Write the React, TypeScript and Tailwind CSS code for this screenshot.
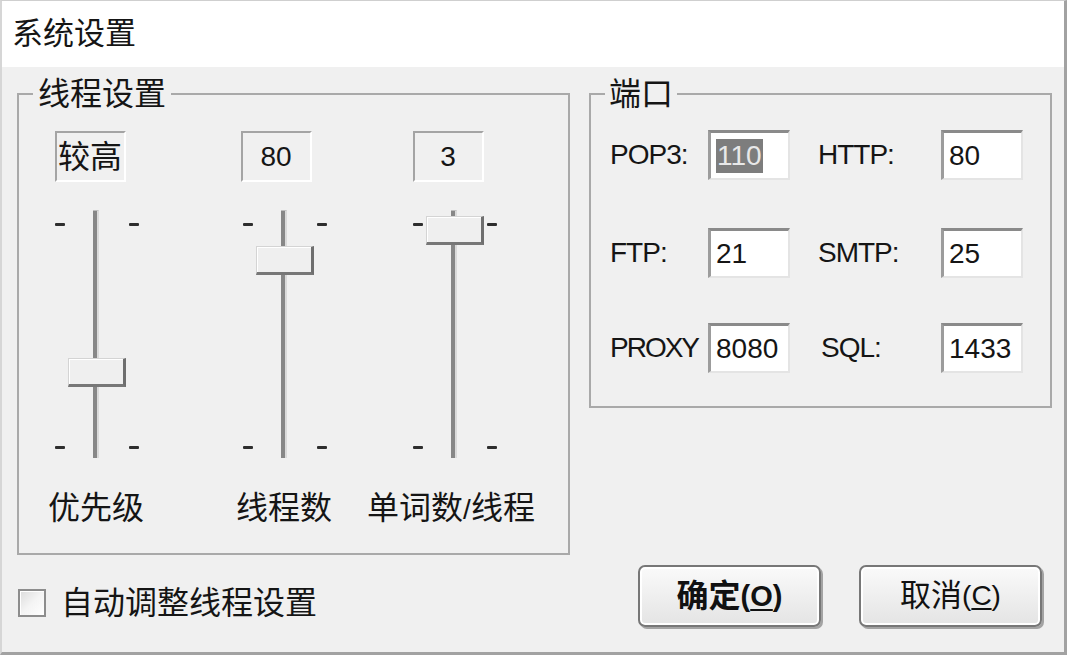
import React from "react";

const FONT = "font-['Liberation_Sans','Noto_Sans_CJK_SC',sans-serif]";

function Slider({ thumbTop }: { thumbTop: number }) {
  return (
    <div className="relative w-[90px] h-[256px] shrink-0">
      <div className="absolute left-[4px] top-[17px] w-[10px] h-[3px] rounded-[1px] bg-[#2e2e2e]" />
      <div className="absolute left-[78px] top-[17px] w-[10px] h-[3px] rounded-[1px] bg-[#2e2e2e]" />
      <div className="absolute left-[4px] top-[240px] w-[10px] h-[3px] rounded-[1px] bg-[#2e2e2e]" />
      <div className="absolute left-[78px] top-[240px] w-[10px] h-[3px] rounded-[1px] bg-[#2e2e2e]" />
      <div className="absolute left-[42px] top-[4px] w-[6px] h-[248px] bg-[#878787] border-r-2 border-r-[#dadada] border-t border-t-[#bdbdbd]" />
      <div
        className="absolute left-[17px] w-[58px] h-[29px] bg-[#efefef] border-t border-l border-t-[#d4d4d4] border-l-[#d4d4d4] border-r-[3px] border-b-[3px] border-r-[#6e6e6e] border-b-[#777777] shadow-[inset_1px_1px_0_#ffffff]"
        style={{ top: thumbTop }}
      />
    </div>
  );
}

function StaticBox({ children, className }: { children: React.ReactNode; className: string }) {
  return (
    <div
      className={`w-[71px] h-[51px] border-2 border-t-[#a4a4a4] border-l-[#a4a4a4] border-b-[#ffffff] border-r-[#ffffff] flex items-center justify-center ${className}`}
    >
      {children}
    </div>
  );
}

function Edit({ value, selected }: { value: string; selected?: boolean }) {
  return (
    <div className="w-[82px] h-[50px] shrink-0 bg-white border-t-[3px] border-l-[3px] border-b-2 border-r-2 border-t-[#8a8a8a] border-l-[#9c9c9c] border-b-[#e4e4e4] border-r-[#e4e4e4] flex items-center pl-[5px] text-[28px] leading-none">
      {selected ? (
        <span className="bg-[#7d7d7d] text-[#e8e8e8] leading-[34px] px-[1px]">{value}</span>
      ) : (
        <span>{value}</span>
      )}
    </div>
  );
}

function PortRow({
  l1,
  v1,
  l2,
  v2,
  sel,
  className,
  l1cls,
  l2pad,
}: {
  l1: string;
  v1: string;
  l2: string;
  v2: string;
  sel?: boolean;
  className: string;
  l1cls?: string;
  l2pad?: string;
}) {
  return (
    <div className={`flex items-center pl-[19px] ${className}`}>
      <div className={`w-[98px] text-[28px] leading-none ${l1cls ?? "tracking-[-1px]"}`}>{l1}</div>
      <Edit value={v1} selected={sel} />
      <div className={`ml-[28px] w-[123px] text-[28px] tracking-[-1px] leading-none ${l2pad ?? ""}`}>{l2}</div>
      <Edit value={v2} />
    </div>
  );
}

export default function App() {
  return (
    <div className={`w-[1070px] h-[657px] bg-white text-[#151515] ${FONT}`}>
      <div className="w-[1067px] h-[655px] flex flex-col border-l-2 border-t border-r-[3px] border-b-[3px] border-l-[#d6d6d6] border-t-[#cfcfcf] border-r-[#a2a2a2] border-b-[#a2a2a2]">
        {/* title */}
        <div className="h-[66px] shrink-0 bg-white flex items-center pl-[10px] text-[31px] leading-[32px]">
          系统设置
        </div>

        {/* body */}
        <div className="flex-1 bg-[#f0f0f0] flex flex-col pt-[11px]">
          <div className="flex items-start">
            {/* thread settings */}
            <fieldset className="ml-[15px] w-[553px] border-2 border-[#a9a9a9]">
              <legend className="ml-[14px] px-[5px] text-[32px] leading-[32px]">线程设置</legend>
              <div className="flex items-start pt-[21px] pb-[27px]">
                {/* col 1 */}
                <div className="ml-[32px] w-[90px] flex flex-col items-center">
                  <StaticBox className="mr-[12px] text-[32px] leading-[32px]">较高</StaticBox>
                  <div className="mt-[24px]">
                    <Slider thumbTop={152} />
                  </div>
                  <div className="mt-[30px] text-[32px] leading-[32px] whitespace-nowrap">优先级</div>
                </div>
                {/* col 2 */}
                <div className="ml-[98px] w-[90px] flex flex-col items-center">
                  <StaticBox className="mr-[16px] text-[28px] leading-none">80</StaticBox>
                  <div className="mt-[24px]">
                    <Slider thumbTop={40} />
                  </div>
                  <div className="mt-[30px] text-[32px] leading-[32px] whitespace-nowrap">线程数</div>
                </div>
                {/* col 3 */}
                <div className="ml-[80px] w-[90px] flex flex-col items-center">
                  <StaticBox className="mr-[12px] text-[28px] leading-none">3</StaticBox>
                  <div className="mt-[24px]">
                    <Slider thumbTop={10} />
                  </div>
                  <div className="mt-[30px] mr-[6px] text-[32px] leading-[32px] whitespace-nowrap">
                    单词数<span className="text-[28px]">/</span>线程
                  </div>
                </div>
              </div>
            </fieldset>

            {/* ports */}
            <fieldset className="ml-[19px] w-[463px] border-2 border-[#a9a9a9]">
              <legend className="ml-[14px] px-[4px] text-[32px] leading-[32px]">端口</legend>
              <div className="flex flex-col pt-[20px] pb-[33px]">
                <PortRow l1="POP3:" v1="110" sel l2="HTTP:" v2="80" className="" />
                <PortRow l1="FTP:" v1="21" l2="SMTP:" v2="25" className="mt-[48px]" />
                <PortRow
                  l1="PROXY"
                  v1="8080"
                  l2="SQL:"
                  v2="1433"
                  className="mt-[45px]"
                  l1cls="tracking-[-2px]"
                  l2pad="pl-[3px]"
                />
              </div>
            </fieldset>
          </div>

          {/* bottom row */}
          <div className="flex items-start justify-between">
            <div className="mt-[32px] ml-[16px] flex items-center">
              <div className="w-[28px] h-[28px] border-2 border-[#8d8d8d] bg-linear-to-br from-[#dcdcdc] via-[#f4f4f4] to-white shadow-[inset_1px_1px_0_#ffffff]" />
              <span className="ml-[15px] text-[32px] leading-[32px]">自动调整线程设置</span>
            </div>
            <div className="mt-[10px] mr-[22px] flex gap-[38px]">
              <button className="w-[183px] h-[62px] rounded-[7px] border-2 border-[#777777] bg-linear-to-b from-[#fafafa] to-[#e4e4e4] shadow-[inset_0_0_0_2px_#ffffff,2px_2px_0_#a3a3a3] flex items-center justify-center font-bold text-[#111]">
                <span className="text-[32px] leading-[32px]">确定</span>
                <span className="text-[29px] leading-[32px]">
                  (<span className="underline underline-offset-[3px]">O</span>)
                </span>
              </button>
              <button className="w-[183px] h-[62px] rounded-[7px] border-2 border-[#777777] bg-linear-to-b from-[#fafafa] to-[#e4e4e4] shadow-[inset_0_0_0_2px_#ffffff,2px_2px_0_#a3a3a3] flex items-center justify-center text-[#111]">
                <span className="text-[31px] leading-[32px]">取消</span>
                <span className="text-[28px] leading-[32px]">
                  (<span className="underline underline-offset-[3px]">C</span>)
                </span>
              </button>
            </div>
          </div>
        </div>
      </div>
    </div>
  );
}
